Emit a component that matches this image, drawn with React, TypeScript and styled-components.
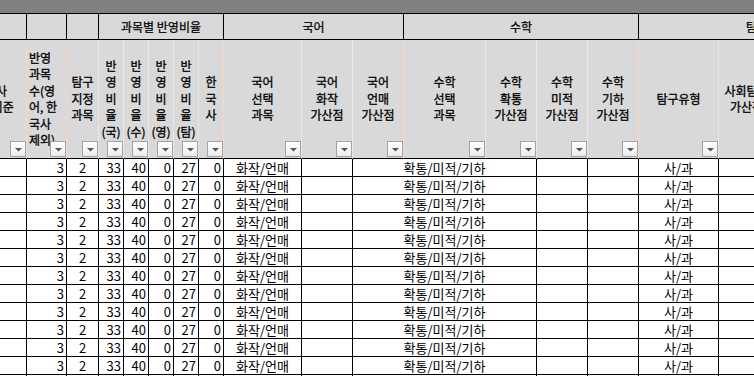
import React from "react";
import styled, { createGlobalStyle } from "styled-components";

const GlobalStyle = createGlobalStyle`
  html, body {
    margin: 0;
    padding: 0;
    background: #ffffff;
    overflow: hidden;
  }
  body {
    font-family: "Noto Sans CJK KR", "Malgun Gothic", "Noto Sans", sans-serif;
    color: #000;
  }
`;

const COLS = [72, 40, 32, 25, 25, 25, 25, 25, 78, 51, 51, 82, 51, 51, 51, 80, 56, 56, 45, 60];
const TEMPLATE = COLS.map((c) => `${c}px`).join(" ");
const TOTAL = COLS.reduce((a, b) => a + b, 0);

const Page = styled.div`
  width: 754px;
  height: 376px;
  overflow: hidden;
  background: #fff;
`;

const TitleBar = styled.div`
  height: 13px;
  background: #808080;
  border-bottom: 1px solid #000;
`;

const Sheet = styled.div`
  width: ${TOTAL}px;
  margin-left: -45px;
`;

const Row = styled.div<{ $h: number }>`
  display: grid;
  grid-template-columns: ${TEMPLATE};
  height: ${(p) => p.$h}px;
`;

const GroupCell = styled.div<{ $span?: number }>`
  grid-column: span ${(p) => p.$span ?? 1};
  box-sizing: border-box;
  background: #d9d9d9;
  border-right: 1px solid #000;
  border-bottom: 1px solid #000;
  display: flex;
  align-items: center;
  justify-content: center;
  font-size: 12px;
  -webkit-text-stroke: 0.25px #000;
  white-space: nowrap;
  overflow: hidden;
`;

const HeaderCell = styled.div<{ $divider: "peach" | "light"; $align?: "left" | "center" }>`
  position: relative;
  box-sizing: border-box;
  background: #d9d9d9;
  border-right: 1px solid ${(p) => (p.$divider === "peach" ? "#f7d8c3" : "#e6e6e6")};
  border-bottom: 1px solid #000;
  display: flex;
  flex-direction: column;
  justify-content: center;
  align-items: ${(p) => (p.$align === "left" ? "flex-start" : "center")};
  padding-left: ${(p) => (p.$align === "left" ? "2px" : "0")};
  font-size: 12px;
  -webkit-text-stroke: 0.3px #000;
  line-height: 16.5px;
  white-space: nowrap;
  overflow: hidden;
`;

const HeaderLine = styled.span`
  display: block;
`;

const FilterButton = styled.div`
  position: absolute;
  right: 0;
  bottom: 1px;
  width: 16px;
  height: 16px;
  box-sizing: border-box;
  border: 1px solid #a3a3a3;
  background: linear-gradient(#ffffff, #ececec);
  display: flex;
  align-items: center;
  justify-content: center;
  padding-top: 1px;
  -webkit-text-stroke: 0;
`;

const DataCell = styled.div<{ $align?: "left" | "center" | "right"; $span?: number }>`
  grid-column: span ${(p) => p.$span ?? 1};
  box-sizing: border-box;
  border-right: 1px solid #000;
  border-bottom: 1px solid #000;
  font-size: 13px;
  line-height: 17px;
  padding: 0 2px;
  text-align: ${(p) => p.$align ?? "left"};
  white-space: nowrap;
  overflow: hidden;
  background: #fff;
`;

type Header = { lines: string[]; divider: "peach" | "light"; align?: "left" | "center" };

const HEADERS: Header[] = [
  { lines: ["한국사", "반영 기준"], divider: "peach" },
  { lines: ["반영", "과목", "수(영", "어, 한", "국사", "제외)"], divider: "peach", align: "left" },
  { lines: ["탐구", "지정", "과목"], divider: "light" },
  { lines: ["반", "영", "비", "율", "(국)"], divider: "light" },
  { lines: ["반", "영", "비", "율", "(수)"], divider: "light" },
  { lines: ["반", "영", "비", "율", "(영)"], divider: "light" },
  { lines: ["반", "영", "비", "율", "(탐)"], divider: "light" },
  { lines: ["한", "국", "사"], divider: "peach" },
  { lines: ["국어", "선택", "과목"], divider: "light" },
  { lines: ["국어", "화작", "가산점"], divider: "light" },
  { lines: ["국어", "언매", "가산점"], divider: "peach" },
  { lines: ["수학", "선택", "과목"], divider: "light" },
  { lines: ["수학", "확통", "가산점"], divider: "light" },
  { lines: ["수학", "미적", "가산점"], divider: "light" },
  { lines: ["수학", "기하", "가산점"], divider: "peach" },
  { lines: ["탐구유형"], divider: "light" },
  { lines: ["사회탐구", "가산점"], divider: "light" },
  { lines: ["과학탐구", "가산점"], divider: "light" },
  { lines: ["탐구", "반영"], divider: "light" },
  { lines: ["비고"], divider: "light" },
];

const FilterIcon = () => (
  <svg width="7" height="4" viewBox="0 0 7 4">
    <polygon points="0,0 7,0 3.5,3.6" fill="#555555" />
  </svg>
);

const ROWS = Array.from({ length: 13 }, (_, i) => i);

export default function App() {
  return (
    <Page>
      <GlobalStyle />
      <TitleBar />
      <Sheet>
        <Row $h={26}>
          <GroupCell />
          <GroupCell />
          <GroupCell />
          <GroupCell $span={5}>과목별 반영비율</GroupCell>
          <GroupCell $span={3}>국어</GroupCell>
          <GroupCell $span={4}>수학</GroupCell>
          <GroupCell $span={4}>탐구</GroupCell>
          <GroupCell />
        </Row>
        <Row $h={119}>
          {HEADERS.map((h, i) => (
            <HeaderCell key={i} $divider={h.divider} $align={h.align}>
              {h.lines.map((l, j) => (
                <HeaderLine key={j}>{l}</HeaderLine>
              ))}
              <FilterButton>
                <FilterIcon />
              </FilterButton>
            </HeaderCell>
          ))}
        </Row>
        {ROWS.map((r) => (
          <Row $h={18} key={r}>
            <DataCell />
            <DataCell $align="right">3</DataCell>
            <DataCell $align="center">2</DataCell>
            <DataCell $align="right">33</DataCell>
            <DataCell $align="right">40</DataCell>
            <DataCell $align="right">0</DataCell>
            <DataCell $align="right">27</DataCell>
            <DataCell $align="right">0</DataCell>
            <DataCell $align="center">화작/언매</DataCell>
            <DataCell />
            <DataCell $align="center" $span={3}>확통/미적/기하</DataCell>
            <DataCell />
            <DataCell />
            <DataCell $align="center">사/과</DataCell>
            <DataCell />
            <DataCell />
            <DataCell />
            <DataCell />
          </Row>
        ))}
      </Sheet>
    </Page>
  );
}
